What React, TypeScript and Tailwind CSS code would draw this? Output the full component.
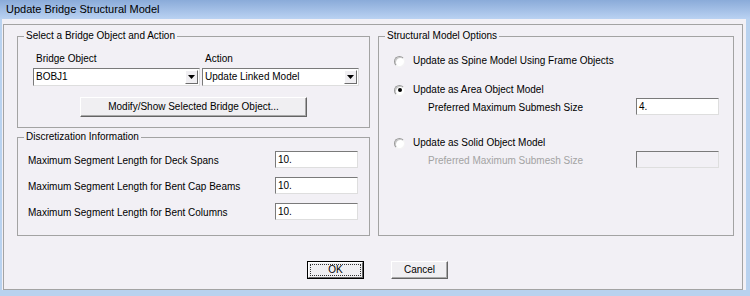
import React from 'react';

// Small sunken edit box (classic Windows look)
function EditBox({ value, disabled }: { value?: string; disabled?: boolean }) {
  return (
    <div
      className={`h-[17px] w-[83px] border border-t-[#7a7a7a] border-l-[#7a7a7a] border-r-[#dedede] border-b-[#dedede] pl-[2px] text-[10px] leading-[15px] ${
        disabled ? 'bg-[#f2f0f5]' : 'bg-white'
      }`}
    >
      {value}
    </div>
  );
}

function ComboBox({ value, width }: { value: string; width: string }) {
  return (
    <div
      className={`${width} h-[18px] flex items-center justify-between border border-t-[#7a7a7a] border-l-[#7a7a7a] border-r-[#dedede] border-b-[#dedede] bg-white pl-[2px] pr-[1px]`}
    >
      <span className="leading-[12px]">{value}</span>
      <div className="w-[13px] h-[14px] flex items-center justify-center bg-[#f0eff2] border border-t-white border-l-white border-r-[#6d6d6d] border-b-[#6d6d6d]">
        <svg width="7" height="4" viewBox="0 0 7 4">
          <polygon points="0,0 7,0 3.5,4" fill="#000" />
        </svg>
      </div>
    </div>
  );
}

function RaisedButton({ children, className }: { children: React.ReactNode; className: string }) {
  return (
    <button
      className={`${className} flex items-center justify-center bg-[#f0eff2] border border-t-white border-l-white border-r-[#646464] border-b-[#646464] shadow-[inset_-1px_-1px_0_#a9a9a9] text-[10px] leading-[12px]`}
    >
      {children}
    </button>
  );
}

function Radio({ checked }: { checked?: boolean }) {
  return (
    <div className="w-[11px] h-[11px] shrink-0 rounded-full flex items-center justify-center bg-white border border-t-[#9a9a9a] border-l-[#9a9a9a] border-r-[#f4f4f4] border-b-[#f4f4f4] shadow-[inset_1px_1px_0_#c9c9c9]">
      {checked && <div className="w-[4px] h-[4px] rounded-full bg-black" />}
    </div>
  );
}

function GroupBox({
  title,
  className,
  children,
}: {
  title: string;
  className: string;
  children: React.ReactNode;
}) {
  return (
    <fieldset className={`${className} border border-[#a3a3a3]`}>
      <legend className="ml-[6px] px-[2px] leading-[12px]">{title}</legend>
      {children}
    </fieldset>
  );
}

const segmentRows = [
  'Maximum Segment Length for Deck Spans',
  'Maximum Segment Length for Bent Cap Beams',
  'Maximum Segment Length for Bent Columns',
];

export default function App() {
  return (
    <div className="w-[750px] h-[296px] overflow-hidden flex flex-col bg-[#b9d2ef] font-['Liberation_Sans',Arial,sans-serif] text-[10px] leading-[12px] text-black">
      {/* Title bar */}
      <div className="h-[19px] shrink-0 bg-linear-to-b from-[#8aabd9] to-[#bad2f2] pl-[6px] text-[11px] leading-[18px]">
        Update Bridge Structural Model
      </div>

      {/* Window body */}
      <div className="ml-[2px] mr-[4px] h-[271px] shrink-0 bg-[#f2f0f5] pt-[5px] pl-[1px] pr-[3px]">
        <div className="h-[266px] border border-[#a3a3a3] pt-[5px] pl-[13px] pr-[8px] flex flex-col">
          <div className="flex gap-[8px]">
            {/* Left column */}
            <div className="w-[353px] flex flex-col gap-[3px]">
              <GroupBox title="Select a Bridge Object and Action" className="h-[98px]">
                <div className="pt-[11px] pl-[15px]">
                  <div className="flex gap-[2px]">
                    <span className="w-[167px] pl-[3px]">Bridge Object</span>
                    <span className="pl-[3px]">Action</span>
                  </div>
                  <div className="flex gap-[2px] mt-[3px]">
                    <ComboBox value="BOBJ1" width="w-[167px]" />
                    <ComboBox value="Update Linked Model" width="w-[157px]" />
                  </div>
                  <RaisedButton className="ml-[47px] mt-[11px] w-[227px] h-[20px]">
                    Modify/Show Selected Bridge Object...
                  </RaisedButton>
                </div>
              </GroupBox>

              <GroupBox title="Discretization Information" className="h-[105px]">
                <div className="pt-[8px] pl-[10px] flex flex-col gap-[9px]">
                  {segmentRows.map((label) => (
                    <div key={label} className="flex h-[17px]">
                      <span className="w-[247px] pt-[4px]">{label}</span>
                      <EditBox value="10." />
                    </div>
                  ))}
                </div>
              </GroupBox>
            </div>

            {/* Right column */}
            <GroupBox title="Structural Model Options" className="w-[356px] h-[206px]">
              <div className="pt-[13px] pl-[15px] flex flex-col">
                <div className="flex items-center h-[12px]">
                  <Radio />
                  <span className="ml-[8px]">Update as Spine Model Using Frame Objects</span>
                </div>

                <div className="flex items-center h-[12px] mt-[17px]">
                  <Radio checked />
                  <span className="ml-[8px]">Update as Area Object Model</span>
                </div>
                <div className="flex h-[17px] mt-[2px] pl-[34px]">
                  <span className="w-[208px] pt-[4px]">Preferred Maximum Submesh Size</span>
                  <EditBox value="4." />
                </div>

                <div className="flex items-center h-[12px] mt-[22px]">
                  <Radio />
                  <span className="ml-[8px]">Update as Solid Object Model</span>
                </div>
                <div className="flex h-[17px] mt-[2px] pl-[34px]">
                  <span className="w-[208px] pt-[4px] text-[#a3a3a3]">Preferred Maximum Submesh Size</span>
                  <EditBox disabled />
                </div>
              </div>
            </GroupBox>
          </div>

          {/* Dialog buttons */}
          <div className="flex gap-[27px] mt-[25px] ml-[290px]">
            <button className="w-[57px] h-[18px] border border-black bg-[#f0eff2] flex">
              <div className="flex-1 flex border border-t-white border-l-white border-r-[#646464] border-b-[#646464]">
                <div className="flex-1 m-[1px] border border-dotted border-[#333] flex items-center justify-center text-[10px] leading-[12px]">
                  OK
                </div>
              </div>
            </button>
            <RaisedButton className="w-[57px] h-[18px]">Cancel</RaisedButton>
          </div>
        </div>
      </div>
    </div>
  );
}
